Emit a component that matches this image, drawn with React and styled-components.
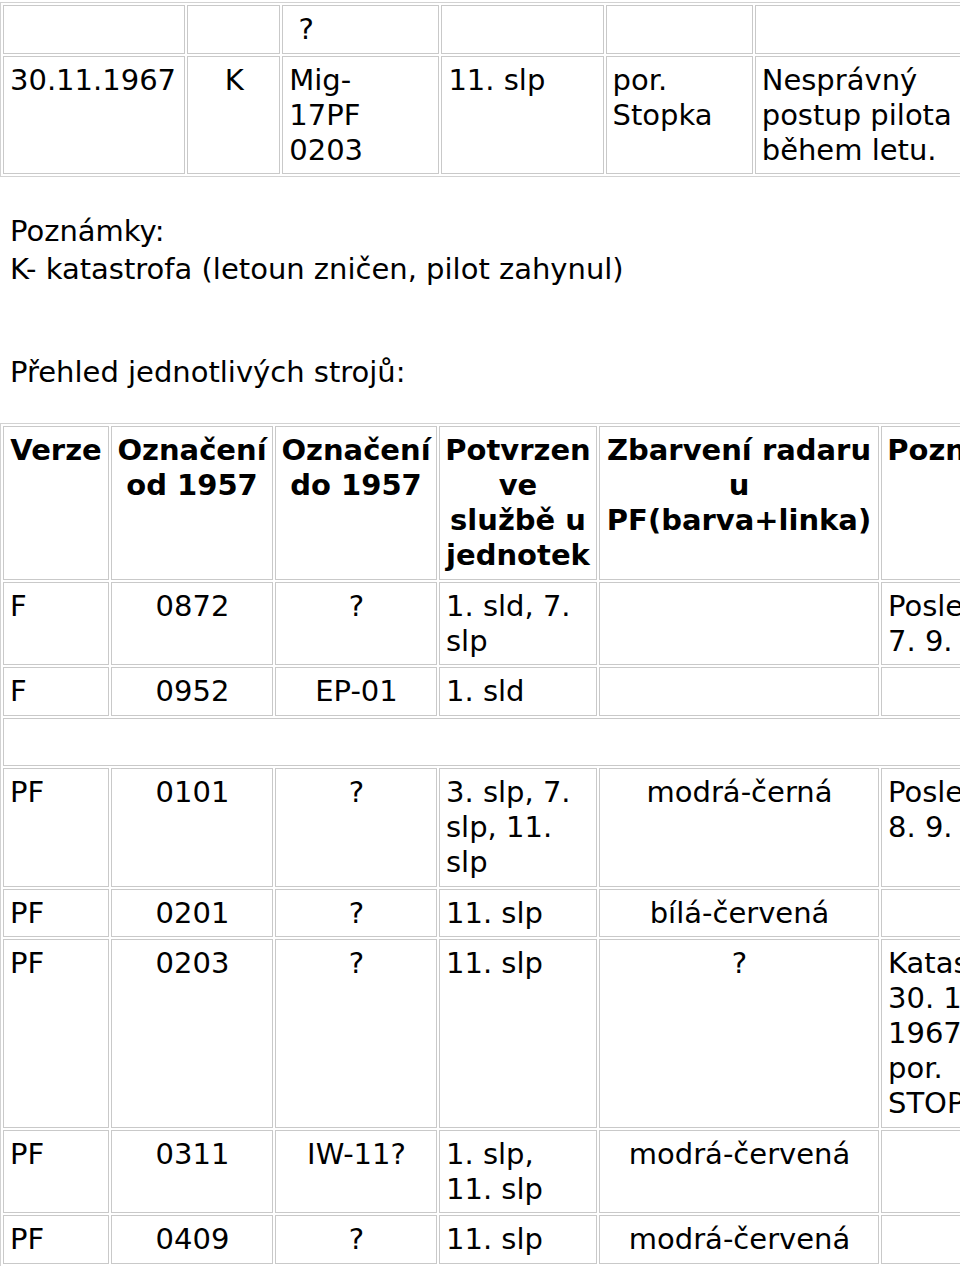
import React from "react";
import styled, { createGlobalStyle } from "styled-components";

const Global = createGlobalStyle`
  html, body {
    margin: 0;
    padding: 0;
    background: #ffffff;
    overflow-x: hidden;
  }
  body {
    font-family: "DejaVu Sans", Verdana, sans-serif;
    font-size: 29px;
    line-height: 35px;
    color: #000;
  }
`;

const Page = styled.div`
  width: 960px;
  overflow: hidden;
  padding-top: 2px;
`;

const Table = styled.table`
  border: 1px solid #d2d2d2;
  border-spacing: 2px;
  border-collapse: separate;
  table-layout: fixed;
  width: ${(p) => p.$w}px;
  margin-top: ${(p) => p.$mt || 0}px;
`;

const Cell = styled.td`
  box-sizing: border-box;
  border: 1px solid #c9c9c9;
  padding: 6px 5px 5.5px 6px;
  vertical-align: top;
  text-align: ${(p) => p.$align || "left"};
  white-space: pre-line;
  width: ${(p) => (p.$w ? `${p.$w}px` : "auto")};
  font-weight: normal;
`;

const HeadCell = styled.th`
  box-sizing: border-box;
  border: 1px solid #c9c9c9;
  padding: 6px 5px 5.5px 5px;
  vertical-align: top;
  text-align: center;
  white-space: pre-line;
  font-weight: bold;
  width: ${(p) => p.$w}px;
`;

const Notes = styled.div`
  margin-top: 35px;
  padding-left: 10px;
  line-height: 38px;
`;

const NoteLine = styled.div``;

const SectionTitle = styled.div`
  margin-top: 67px;
  padding-left: 10px;
  line-height: 35px;
`;

const topWidths = [182, 93, 157, 162, 147, 232];

const crashRow = [
  { text: "30.11.1967", align: "left" },
  { text: "K", align: "center" },
  { text: "Mig-\n17PF\n0203", align: "left" },
  { text: "11. slp", align: "left" },
  { text: "por.\nStopka", align: "left" },
  { text: "Nesprávný\npostup pilota\nběhem letu.", align: "left" },
];

const headWidths = [106, 162, 162, 158, 280, 180];
const heads = [
  "Verze",
  "Označení\nod 1957",
  "Označení\ndo 1957",
  "Potvrzen\nve\nslužbě u\njednotek",
  "Zbarvení radaru\nu\nPF(barva+linka)",
  "Poznámka",
];
const aligns = ["left", "center", "center", "left", "center", "left"];

const rows = [
  ["F", "0872", "?", "1. sld, 7.\nslp", "", "Poslední let\n7. 9. 1962"],
  ["F", "0952", "EP-01", "1. sld", "", ""],
  null,
  ["PF", "0101", "?", "3. slp, 7.\nslp, 11.\nslp", "modrá-černá", "Poslední let\n8. 9. 1962"],
  ["PF", "0201", "?", "11. slp", "bílá-červená", ""],
  ["PF", "0203", "?", "11. slp", "?", "Katastrofa\n30. 11.\n1967\npor.\nSTOPKA"],
  ["PF", "0311", "IW-11?", "1. slp,\n11. slp", "modrá-červená", ""],
  ["PF", "0409", "?", "11. slp", "modrá-červená", ""],
];

export default function App() {
  return (
    <>
      <Global />
      <Page>
        <Table $w={990}>
          <tbody>
            <tr>
              {topWidths.map((w, i) => (
                <Cell key={i} $w={w}>
                  {i === 2 ? "\u00a0?" : ""}
                </Cell>
              ))}
            </tr>
            <tr>
              {crashRow.map((c, i) => (
                <Cell key={i} $align={c.align}>
                  {c.text}
                </Cell>
              ))}
            </tr>
          </tbody>
        </Table>

        <Notes>
          <NoteLine>Poznámky:</NoteLine>
          <NoteLine>K- katastrofa (letoun zničen, pilot zahynul)</NoteLine>
        </Notes>

        <SectionTitle>Přehled jednotlivých strojů:</SectionTitle>

        <Table $w={1064} $mt={33}>
          <thead>
            <tr>
              {heads.map((h, i) => (
                <HeadCell key={i} $w={headWidths[i]}>
                  {h}
                </HeadCell>
              ))}
            </tr>
          </thead>
          <tbody>
            {rows.map((r, ri) =>
              r === null ? (
                <tr key={ri}>
                  <Cell colSpan={6}>{"\u00a0"}</Cell>
                </tr>
              ) : (
                <tr key={ri}>
                  {r.map((v, ci) => (
                    <Cell key={ci} $align={aligns[ci]}>
                      {v}
                    </Cell>
                  ))}
                </tr>
              )
            )}
          </tbody>
        </Table>
      </Page>
    </>
  );
}
